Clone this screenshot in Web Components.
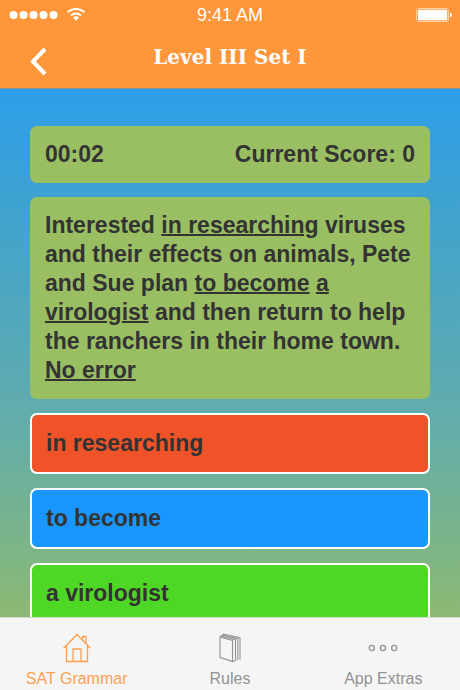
<!DOCTYPE html>
<html lang="en">
<head>
<meta charset="utf-8">
<meta name="viewport" content="width=device-width, initial-scale=1">
<title>SAT Grammar</title>
<style>
	html, body {
		height: 100%;
		margin: 0;
	}

	body {
		font-family: "Liberation Sans", Arial, sans-serif;
		color: #333;
	}
</style>
</head>
<body>
<quiz-app></quiz-app>

<script>
function makeTemplate(html) {
	const t = document.createElement('template');
	t.innerHTML = html;
	return t;
}

class BaseElement extends HTMLElement {
	constructor() {
		super();
		const s = this.attachShadow({ mode: 'open' });
		s.appendChild(this.constructor.template.content.cloneNode(true));
	}
}

customElements.define('status-bar', class extends BaseElement {
	static template = makeTemplate(`
		<style>
			:host {
				display: grid;
				grid-template-columns: 1fr auto 1fr;
				align-items: center;
				height: 30px;
				padding: 0 8px;
				font-size: 18px;
				line-height: 20px;
			}

			svg {
				display: block;
			}

			.battery {
				justify-self: end;
			}
		</style>

		<svg width="78" height="16" viewBox="0 0 78 16" fill="#fff" aria-hidden="true">
			<circle cx="5.5" cy="8" r="4"/>
			<circle cx="15.5" cy="8" r="4"/>
			<circle cx="25.5" cy="8" r="4"/>
			<circle cx="35.5" cy="8" r="4"/>
			<circle cx="45.5" cy="8" r="4"/>
			<g fill="none" stroke="#fff" stroke-width="2">
				<path d="M59.7 5.3a11.8 11.8 0 0 1 16.6 0"/>
				<path d="M62.9 8.6a7.2 7.2 0 0 1 10.2 0"/>
			</g>
			<path d="M68 13.8l-3-3a4.3 4.3 0 0 1 6 0z"/>
		</svg>
		<span>9:41 AM</span>
		<svg class="battery" width="37" height="16" viewBox="0 0 37 16" aria-hidden="true">
			<rect x="1.7" y="1.5" width="31.8" height="13" rx="2" fill="none" stroke="#fff" stroke-opacity=".6"/>
			<rect x="3" y="2.8" width="29.2" height="10.4" rx="1" fill="#fff"/>
			<path d="M35 5.5q2 1 2 2.5t-2 2.5z" fill="#fff"/>
		</svg>
	`);
});

customElements.define('nav-header', class extends BaseElement {
	static template = makeTemplate(`
		<style>
			:host {
				display: block;
				box-sizing: border-box;
				height: 89px;
				background: #ff9639;
				border-bottom: 1px solid #8f948f;
				color: #fff;
			}

			.bar {
				display: grid;
				grid-template-columns: 1fr auto 1fr;
				align-items: start;
				padding: 0 24px;
			}

			button {
				justify-self: start;
				margin: 14px 0 0;
				padding: 0;
				border: 0;
				background: none;
				color: inherit;
				cursor: pointer;
			}

			svg {
				display: block;
			}

			h1 {
				margin: 14px 0 0;
				font: bold 20px/26px Rockwell, "DejaVu Serif", serif;
			}
		</style>

		<status-bar></status-bar>
		<div class="bar">
			<button type="button" aria-label="Back">
				<svg width="30" height="34" viewBox="0 0 30 34" fill="none" stroke="#fff" stroke-width="4"><path d="M21 5L9 17.5 21 30"/></svg>
			</button>
			<h1><slot></slot></h1>
		</div>
	`);
});

customElements.define('quiz-card', class extends BaseElement {
	static template = makeTemplate(`
		<style>
			:host {
				display: block;
				padding: 14px 15px;
				border-radius: 7px;
				background: #9abf63;
			}

			:host([split]) {
				display: flex;
				justify-content: space-between;
			}
		</style>

		<slot></slot>
	`);
});

customElements.define('answer-button', class extends BaseElement {
	static template = makeTemplate(`
		<style>
			:host {
				display: block;
			}

			button {
				display: block;
				width: 100%;
				padding: 14px;
				border: 2px solid #fff;
				border-radius: 7px;
				background: var(--answer-color);
				font: inherit;
				color: inherit;
				text-align: left;
				cursor: pointer;
			}
		</style>

		<button type="button"><slot></slot></button>
	`);
});

customElements.define('tab-item', class extends BaseElement {
	static template = makeTemplate(`
		<style>
			:host {
				display: block;
				color: #929292;
			}

			:host([active]) {
				color: #ff9f4d;
			}

			a {
				display: flex;
				flex-direction: column;
				align-items: center;
				gap: 5px;
				padding-top: 12px;
				color: inherit;
				text-decoration: none;
				font-size: 16px;
				line-height: 20px;
			}
		</style>

		<a href="#"><slot name="icon"></slot><slot></slot></a>
	`);
});

customElements.define('tab-bar', class extends BaseElement {
	static template = makeTemplate(`
		<style>
			:host {
				display: grid;
				grid-template-columns: repeat(3, 1fr);
				box-sizing: border-box;
				height: 73px;
				border-top: 1px solid #d3dccd;
				background: #f5f5f6;
			}

			svg {
				display: block;
				fill: none;
				stroke: currentColor;
			}
		</style>

		<tab-item active>
			<svg slot="icon" width="32" height="34" viewBox="0 0 32 34" stroke-width="1.3">
				<path d="M2.5 18.3L16 4.5l13.5 13.8M5.5 15.5v16h21v-16M12 31.5V19h8v12.5M21.5 10V6.5h3.5v7"/>
			</svg>
			SAT Grammar
		</tab-item>
		<tab-item>
			<svg slot="icon" width="32" height="34" viewBox="0 0 32 34" stroke-width="1.1">
				<path d="M6 7l12.5 3.4v21L6 27.5zM6 7l3.5-3L26 7.8v21.7M7.2 6l14.3 3.6v21.2M8.4 5l15.4 3.8v21.4M18.5 31.4l3-.6"/>
			</svg>
			Rules
		</tab-item>
		<tab-item>
			<svg slot="icon" width="32" height="34" viewBox="0 0 32 34" stroke-width="1.3">
				<circle cx="4.8" cy="18" r="2.6"/>
				<circle cx="16" cy="18" r="2.6"/>
				<circle cx="27.2" cy="18" r="2.6"/>
			</svg>
			App Extras
		</tab-item>
	`);
});

customElements.define('quiz-app', class extends BaseElement {
	static template = makeTemplate(`
		<style>
			:host {
				display: flex;
				flex-direction: column;
				height: 100vh;
			}

			nav-header, tab-bar {
				flex: none;
			}

			main {
				flex: 1;
				min-height: 0;
				overflow: hidden;
				display: flex;
				flex-direction: column;
				gap: 14px;
				padding: 37px 30px 0;
				background: linear-gradient(#2d9eea, #41a3cd 24%, #62acac 62%, #7db585 88%, #8fb873);
				font-weight: bold;
				font-size: 23px;
				line-height: 29px;
			}

			main > * {
				flex: none;
			}

			u {
				text-decoration-thickness: 2px;
			}
		</style>

		<nav-header>Level III Set I</nav-header>
		<main>
			<quiz-card split><span>00:02</span><span>Current Score: 0</span></quiz-card>
			<quiz-card>Interested <u>in researching</u> viruses and their effects on animals, Pete and Sue plan <u>to become</u> <u>a virologist</u> and then return to help the ranchers in their home town. <u>No error</u></quiz-card>
			<answer-button style="--answer-color: #f05328">in researching</answer-button>
			<answer-button style="--answer-color: #1a97ff">to become</answer-button>
			<answer-button style="--answer-color: #4fd726">a virologist</answer-button>
		</main>
		<tab-bar></tab-bar>
	`);
});
</script>
</body>
</html>
